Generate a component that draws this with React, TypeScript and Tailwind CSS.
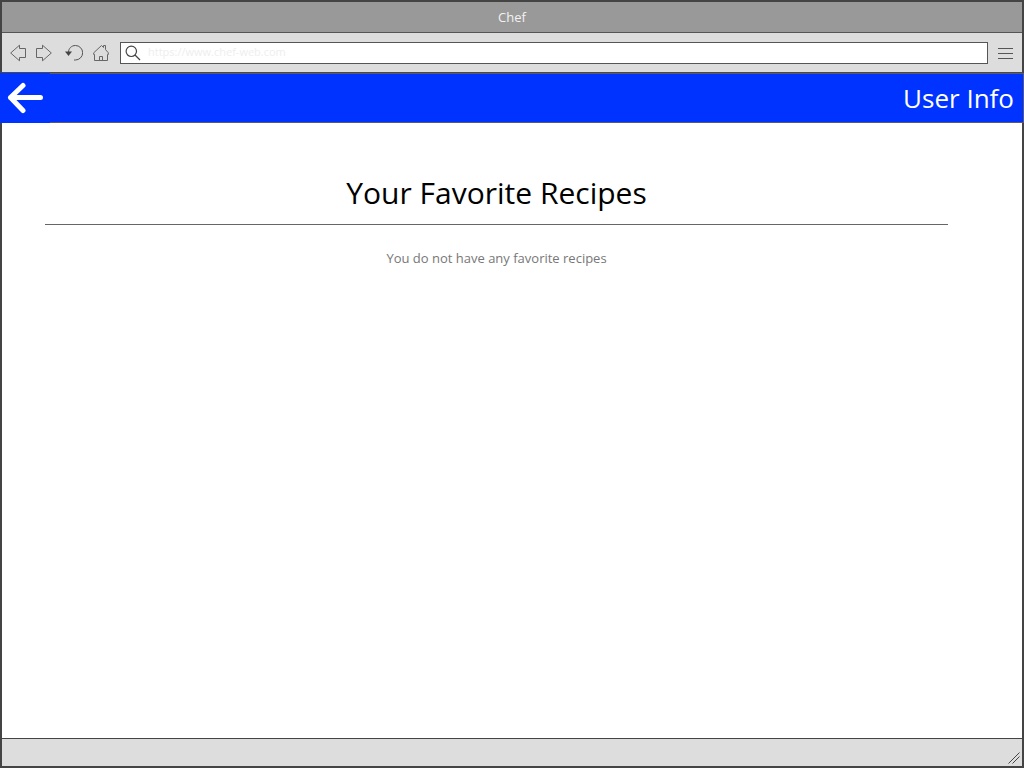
import React from "react";

function ArrowOutline({ flipped = false }: { flipped?: boolean }) {
  return (
    <svg width="16" height="18" viewBox="0 0 16 18" fill="none" stroke="#666" className={flipped ? "-scale-x-100" : ""} aria-hidden="true">
      <path d="M.7 9 9.5 1.2V4.5H15.5V13.5H9.5V16.8Z" />
    </svg>
  );
}

function ReloadIcon() {
  return (
    <svg width="18" height="18" viewBox="0 0 18 18" fill="none" stroke="#555" aria-hidden="true">
      <path d="M3.5 8.5C3.5 4.3 6.6 1.5 10.4 1.5a7 7 0 0 1 0 14.5H9" />
      <path d="M0 7.5H7L3.5 12Z" fill="#444" stroke="none" />
    </svg>
  );
}

function HomeIcon() {
  return (
    <svg width="16" height="18" viewBox="0 0 16 18" fill="none" stroke="#666" aria-hidden="true">
      <path d="M1.5 16.5V10.5H.7V8.8L8.5 1.5 10.5 3.5V1.5H12.5V5.5L15.3 8.8V10.5H14.5V16.5Z" />
      <path d="M6.5 16.5V12.5H9.5V16.5" />
    </svg>
  );
}

function Toolbar() {
  return (
    <div className="flex h-10 items-center border-b border-[#4a4a4a] bg-[#ddd] pr-2 pl-2">
      <nav className="flex items-center pt-px" aria-label="Browser">
        <button aria-label="Back" className="flex w-[26px] items-center"><ArrowOutline /></button>
        <button aria-label="Forward" className="flex w-[29px] items-center"><ArrowOutline flipped /></button>
        <button aria-label="Reload" className="flex w-7 items-center"><ReloadIcon /></button>
        <button aria-label="Home" className="flex w-[27px] items-center"><HomeIcon /></button>
      </nav>
      <label className="flex h-[22px] flex-1 items-center border border-[#555] bg-white pl-1">
        <svg width="16" height="16" viewBox="0 0 16 16" fill="none" stroke="#444" strokeWidth="1.2" aria-hidden="true">
          <circle cx="6.3" cy="6.3" r="5.2" />
          <path d="m10 10 5 5" />
        </svg>
        <input
          aria-label="Address"
          type="text"
          defaultValue="https://www.chef-web.com"
          className="ml-[7px] h-5 min-w-0 flex-1 bg-transparent pb-0.5 text-[11px] leading-5 text-[#eee] outline-none"
        />
      </label>
      <button aria-label="Menu" className="ml-[10px] flex w-4 flex-col gap-1 pt-px pr-px">
        <span className="h-px bg-[#555]" />
        <span className="h-px bg-[#555]" />
        <span className="h-px bg-[#555]" />
      </button>
    </div>
  );
}

export default function App() {
  return (
    <div className="flex min-h-screen flex-col border-2 border-[#444] bg-white font-['Open_Sans','Noto_Sans',sans-serif]">
      <div className="flex h-[31px] items-center justify-center border-b border-[#555] bg-[#999] pt-0.5 text-[13px] text-[#f2f2f2]">
        Chef
      </div>
      <Toolbar />
      <header className="-mx-0.5 flex h-[50px] bg-[#0033ff]">
        <button aria-label="Go back" className="flex w-[50px] items-center justify-center pl-px">
          <svg width="37" height="32" viewBox="0 0 37 32" fill="none" stroke="#fff" strokeWidth="5" strokeLinecap="round" strokeLinejoin="round" aria-hidden="true">
            <path d="M16 3.5 3.5 15.5 16 28.5M3.5 15.5H33.5" />
          </svg>
        </button>
        <div className="flex flex-1 items-center justify-end border-y border-r border-[#5a5a6e] pr-[9px]">
          <a href="#user" className="text-[26px] leading-9 text-white">User Info</a>
        </div>
      </header>
      <main className="flex-1 pt-12 pr-[74px] pl-[43px] text-center">
        <h1 className="border-b border-[#666] pb-[9px] text-[30px] leading-[44px] text-black">Your Favorite Recipes</h1>
        <p className="mt-[23px] text-[13px] leading-5 text-[#777]">You do not have any favorite recipes</p>
      </main>
      <footer className="flex h-7 items-end justify-end border-t border-[#444] bg-[#ddd] pr-0.5 pb-0.5">
        <svg width="12" height="12" viewBox="0 0 12 12" fill="none" stroke="#444" aria-hidden="true">
          <path d="M.5 11.5 11.5.5M4.5 11.5 11.5 4.5" />
        </svg>
      </footer>
    </div>
  );
}
